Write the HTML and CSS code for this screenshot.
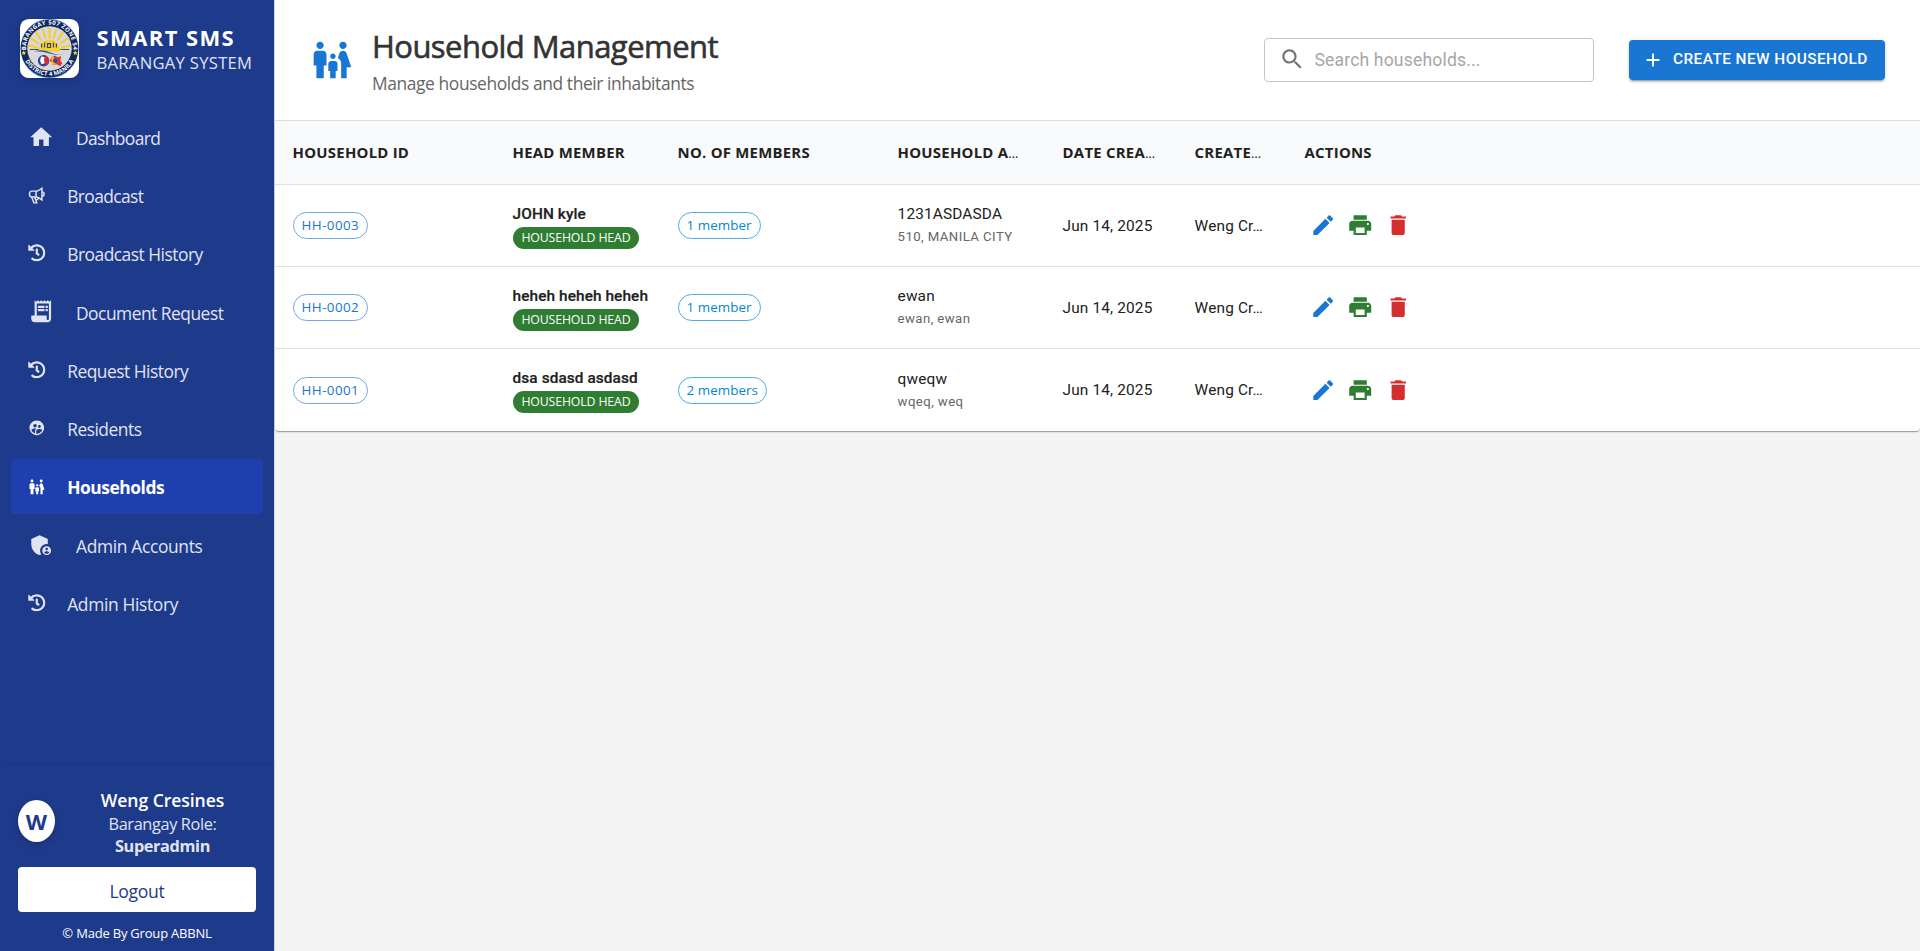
FILE: index.html
```html
<!DOCTYPE html>
<html lang="en">
<head>
<meta charset="utf-8">
<title>Household Management</title>
<link rel="stylesheet" href="styles.css">
</head>
<body>
<svg class="defs" width="0" height="0" aria-hidden="true">
  <symbol id="history" viewBox="0 0 512 512"><path d="M504 255.531c.253 136.64-111.18 248.372-247.82 248.468-59.015.042-113.223-20.53-155.822-54.911-11.077-8.94-11.905-25.541-1.839-35.607l11.267-11.267c8.609-8.609 22.353-9.551 31.891-1.984C173.062 425.135 212.781 440 256 440c101.705 0 184-82.311 184-184 0-101.705-82.311-184-184-184-48.814 0-93.149 18.969-126.068 49.932l50.754 50.754c10.08 10.08 2.941 27.314-11.313 27.314H24c-8.837 0-16-7.163-16-16V38.627c0-14.254 17.234-21.393 27.314-11.314l49.372 49.372C129.209 34.136 189.552 8 256 8c136.81 0 247.747 110.78 248 247.531zm-180.912 78.784l9.823-12.63c8.138-10.463 6.253-25.542-4.21-33.679L288 256.349V152c0-13.255-10.745-24-24-24h-16c-13.255 0-24 10.745-24 24v135.651l65.409 50.874c10.463 8.137 25.541 6.253 33.679-4.21z"/></symbol>
  <symbol id="family" viewBox="0 0 24 24"><path d="M16 4c0-1.11.89-2 2-2s2 .89 2 2-.89 2-2 2-2-.89-2-2zm4 18v-6h2.5l-2.54-7.63C19.68 7.55 18.92 7 18.06 7h-.12c-.86 0-1.63.55-1.9 1.37l-.86 2.58c1.08.6 1.82 1.73 1.82 3.05v8h3zm-7.5-10.5c.83 0 1.5-.67 1.5-1.5s-.67-1.5-1.5-1.5S11 9.17 11 10s.67 1.5 1.5 1.5zM5.5 6c1.11 0 2-.89 2-2s-.89-2-2-2-2 .89-2 2 .89 2 2 2zm2 16v-7H9V9c0-1.1-.9-2-2-2H4c-1.1 0-2 .9-2 2v6h1.5v7h4zm6.5 0v-4h1v-4c0-.82-.68-1.5-1.5-1.5h-2c-.82 0-1.5.68-1.5 1.5v4h1v4h3z"/></symbol>
  <symbol id="edit" viewBox="0 0 24 24"><path d="M3 17.25V21h3.75L17.81 9.94l-3.75-3.75L3 17.25zM20.71 7.04c.39-.39.39-1.02 0-1.41l-2.34-2.34c-.39-.39-1.02-.39-1.41 0l-1.83 1.83 3.75 3.75 1.83-1.83z"/></symbol>
  <symbol id="print" viewBox="0 0 24 24"><path d="M19 8H5c-1.66 0-3 1.34-3 3v6h4v4h12v-4h4v-6c0-1.66-1.34-3-3-3zm-3 11H8v-5h8v5zm3-7c-.55 0-1-.45-1-1s.45-1 1-1 1 .45 1 1-.45 1-1 1zm-1-9H6v4h12V3z"/></symbol>
  <symbol id="trash" viewBox="0 0 24 24"><path d="M6 19c0 1.1.9 2 2 2h8c1.1 0 2-.9 2-2V7H6v12zM19 4h-3.5l-1-1h-5l-1 1H5v2h14V4z"/></symbol>
</svg>
<div class="app">
  <aside class="sidebar">
    <div class="brand">
      <svg class="logo" viewBox="0 0 60 60">
        <defs>
          <path id="arc-top" d="M7.2 37A24 24 0 1 1 52.8 37"/>
          <path id="arc-bottom" d="M4 39.5A27.6 27.6 0 0 0 56 39.5"/>
        </defs>
        <rect width="60" height="60" rx="9" fill="#fff"/>
        <path d="M9 9A30 30 0 0 0 9 51Q17 60 30 60T51 51A30 30 0 0 0 51 9Q43 0 30 0T9 9z" fill="#4f86e0"/>
        <circle cx="30" cy="30" r="29.2" fill="#12295c"/>
        <circle cx="30" cy="30" r="22.6" fill="#d9d9dc"/>
        <g stroke="#f7cb2d" stroke-width="2">
          <path d="M30 20V9M26 20L23 10M34 20l3-10M22 22l-6-9M38 22l6-9M19 25l-9-6M41 25l9-6M18 29l-10-2M42 29l10-2"/>
        </g>
        <path d="M19 33a11 12 0 0 1 22 0z" fill="#f9cf2e"/>
        <path d="M22 25v4M25 24v5M28 25h3v4h-3zM34 24v5M37 25v4" stroke="#33456b" stroke-width="1.2" fill="none"/>
        <path d="M10 31h9M41 31h9" stroke="#4d4a38" stroke-width="1"/>
        <path d="M14 33q8-3 17 1t16 0q-6 4-17 1t-16-2z" fill="#1f5cb0"/>
        <circle cx="24" cy="42.5" r="5.8" fill="#23469b"/>
        <path d="M24 36.7a5.8 5.8 0 0 1 3 10.5q-3-1-2-5t-1-5.5z" fill="#d42c36"/>
        <path d="M22 38q-3 4 0 8l3-1q-1-3 0-6z" fill="#fff"/>
        <path d="M32 39l4-2 2 2 4-1-1 4 2 3-2 3-4-2-3 1-1-3-3-1z" fill="#d9382f"/>
        <path d="M32 38l3 1-2 4 4 3-5 1z" fill="#edb93b"/>
        <path d="M35 40l3 1-1 4-3-1z" fill="#244b9f"/>
        <path d="M3.8 32l.8 1.5 1.6.3-1.2 1.1.3 1.7-1.5-.8-1.5.8.3-1.7-1.2-1.1 1.6-.3zM56.2 32l.8 1.5 1.6.3-1.2 1.1.3 1.7-1.5-.8-1.5.8.3-1.7-1.2-1.1 1.6-.3z" fill="#f9cf2e"/>
        <text class="seal-text seal-top"><textPath href="#arc-top" startOffset="50%" text-anchor="middle">BARANGAY 507 ZONE 54</textPath></text>
        <text class="seal-text"><textPath href="#arc-bottom" startOffset="50%" text-anchor="middle">DISTRICT 4 MANILA</textPath></text>
      </svg>
      <div class="brand-text">
        <div class="brand-name">SMART SMS</div>
        <div class="brand-sub">BARANGAY SYSTEM</div>
      </div>
    </div>
    <nav class="nav">
      <a class="item"><svg class="lg" viewBox="0 0 24 24"><path d="M10 20v-6h4v6h5v-8h3L12 3 2 12h3v8z"/></svg><span class="t-wide">Dashboard</span></a>
      <a class="item"><svg class="sm" viewBox="0 0 24 24"><path fill="none" stroke="currentColor" stroke-width="2" d="M11 15c3 0 8 4 8 4V3s-5 4-8 4v8zM5 15l3 8h4l-3-8M19 14a3 3 0 0 0 0-6M11 19c1 0 3-1 3-3M2 11c0 3 2 4 3 4h6V7H5c-1 0-3 1-3 4z"/></svg><span class="t-wide">Broadcast</span></a>
      <a class="item"><svg class="sm"><use href="#history"/></svg><span>Broadcast History</span></a>
      <a class="item"><svg class="lg" viewBox="0 0 24 24"><path d="M19.5 3.5 18 2l-1.5 1.5L15 2l-1.5 1.5L12 2l-1.5 1.5L9 2 7.5 3.5 6 2v14H3v3c0 1.66 1.34 3 3 3h12c1.66 0 3-1.34 3-3V2l-1.5 1.5zM19 19c0 .55-.45 1-1 1s-1-.45-1-1v-3H8V5h11v14zM9 7h6v2H9zM16 7h2v2h-2zM9 10h6v2H9zM16 10h2v2h-2z"/></svg><span>Document Request</span></a>
      <a class="item"><svg class="sm"><use href="#history"/></svg><span>Request History</span></a>
      <a class="item"><svg class="sm" viewBox="0 0 24 24"><path d="M11.99 2c-5.52 0-10 4.48-10 10s4.48 10 10 10 10-4.48 10-10-4.48-10-10-10zm3.61 6.34c1.07 0 1.93.86 1.93 1.93 0 1.07-.86 1.93-1.93 1.93-1.07 0-1.93-.86-1.93-1.93-.01-1.07.86-1.93 1.93-1.93zm-6-1.58c1.3 0 2.36 1.06 2.36 2.36 0 1.3-1.06 2.36-2.36 2.36s-2.36-1.06-2.36-2.36c0-1.31 1.05-2.36 2.36-2.36zm0 9.13v3.75c-2.4-.75-4.3-2.6-5.14-4.96 1.05-1.12 3.67-1.69 5.14-1.69.53 0 1.2.08 1.9.22-1.64.87-1.9 2.02-1.9 2.68zM11.99 20c-.27 0-.53-.01-.79-.04v-4.07c0-1.42 2.94-2.13 4.4-2.13 1.07 0 2.92.39 3.84 1.15-1.17 2.97-4.06 5.09-7.45 5.09z"/></svg><span>Residents</span></a>
      <a class="item active"><svg class="sm"><use href="#family"/></svg><span>Households</span></a>
      <a class="item"><svg class="lg" viewBox="0 0 24 24"><path d="M17 11c.34 0 .67.04 1 .09V6.27L10.5 3 3 6.27v4.91c0 4.54 3.2 8.79 7.5 9.82.55-.13 1.08-.32 1.6-.55-.69-.98-1.1-2.17-1.1-3.45 0-3.31 2.69-6 6-6z"/><path d="M17 13c-2.21 0-4 1.79-4 4s1.79 4 4 4 4-1.79 4-4-1.79-4-4-4zm0 1.38c.62 0 1.12.51 1.12 1.12s-.51 1.12-1.12 1.12-1.12-.51-1.12-1.12.5-1.12 1.12-1.12zm0 5.37c-.93 0-1.74-.46-2.24-1.17.05-.72 1.51-1.08 2.24-1.08s2.19.36 2.24 1.08c-.5.71-1.31 1.17-2.24 1.17z"/></svg><span class="t-admin">Admin Accounts</span></a>
      <a class="item"><svg class="sm"><use href="#history"/></svg><span class="t-admin">Admin History</span></a>
    </nav>
    <div class="account">
      <div class="profile">
        <div class="avatar">W</div>
        <div class="who">
          <div class="who-name">Weng Cresines</div>
          <div class="who-role">Barangay Role:</div>
          <div class="who-level">Superadmin</div>
        </div>
      </div>
      <button class="logout">Logout</button>
      <div class="credit">© Made By Group ABBNL</div>
    </div>
  </aside>
  <main class="main">
    <header class="head">
      <svg class="head-icon"><use href="#family"/></svg>
      <div class="head-text">
        <h1>Household Management</h1>
        <p>Manage households and their inhabitants</p>
      </div>
      <div class="search">
        <svg viewBox="0 0 24 24"><path d="M15.5 14h-.79l-.28-.27C15.41 12.59 16 11.11 16 9.5 16 5.91 13.09 3 9.5 3S3 5.91 3 9.5 5.91 16 9.5 16c1.61 0 3.09-.59 4.23-1.57l.27.28v.79l5 4.99L20.49 19l-4.99-5zm-6 0C7.01 14 5 11.99 5 9.5S7.01 5 9.5 5 14 7.01 14 9.5 11.99 14 9.5 14z"/></svg>
        <span>Search households...</span>
      </div>
      <button class="create"><svg viewBox="0 0 24 24"><path d="M19 13h-6v6h-2v-6H5v-2h6V5h2v6h6v2z"/></svg><span>CREATE NEW HOUSEHOLD</span></button>
    </header>
    <section class="table">
      <div class="row thead">
        <div>HOUSEHOLD ID</div><div>HEAD MEMBER</div><div>NO. OF MEMBERS</div><div>HOUSEHOLD A<i>…</i></div><div>DATE CREA<i>…</i></div><div>CREATE<i>…</i></div><div>ACTIONS</div>
      </div>
      <div class="row">
        <div><span class="chip">HH-0003</span></div>
        <div class="stack"><b>JOHN kyle</b><span class="badge">HOUSEHOLD HEAD</span></div>
        <div><span class="chip info">1 member</span></div>
        <div class="stack addr"><span>1231ASDASDA</span><small>510, MANILA CITY</small></div>
        <div>Jun 14, 2025</div><div>Weng Cr…</div>
        <div class="actions"><svg class="edit"><use href="#edit"/></svg><svg class="print"><use href="#print"/></svg><svg class="trash"><use href="#trash"/></svg></div>
      </div>
      <div class="row">
        <div><span class="chip">HH-0002</span></div>
        <div class="stack"><b>heheh heheh heheh</b><span class="badge">HOUSEHOLD HEAD</span></div>
        <div><span class="chip info">1 member</span></div>
        <div class="stack addr"><span>ewan</span><small>ewan, ewan</small></div>
        <div>Jun 14, 2025</div><div>Weng Cr…</div>
        <div class="actions"><svg class="edit"><use href="#edit"/></svg><svg class="print"><use href="#print"/></svg><svg class="trash"><use href="#trash"/></svg></div>
      </div>
      <div class="row">
        <div><span class="chip">HH-0001</span></div>
        <div class="stack"><b>dsa sdasd asdasd</b><span class="badge">HOUSEHOLD HEAD</span></div>
        <div><span class="chip info">2 members</span></div>
        <div class="stack addr"><span>qweqw</span><small>wqeq, weq</small></div>
        <div>Jun 14, 2025</div><div>Weng Cr…</div>
        <div class="actions"><svg class="edit"><use href="#edit"/></svg><svg class="print"><use href="#print"/></svg><svg class="trash"><use href="#trash"/></svg></div>
      </div>
    </section>
  </main>
</div>
</body>
</html>
```
FILE: styles.css
```css
* { box-sizing: border-box; }
body { margin: 0; background: #f4f4f4; font-family: "Open Sans", "Noto Sans", sans-serif; }
.defs { display: block; }
svg { fill: currentColor; flex: none; }
button { border: 0; font-family: inherit; }
.app { display: flex; height: 951px; overflow: hidden; }

/* Sidebar */
.sidebar { width: 275px; flex: none; display: flex; flex-direction: column; background: #1e3a8a; border-right: 1px solid #d5d8de; color: #e0e4f2; }
.brand { display: flex; align-items: center; gap: 17.5px; padding: 19px 0 0 20px; }
.logo { width: 59px; height: 59px; overflow: visible; border-radius: 9px; box-shadow: 0 2px 6px rgba(0,0,0,.2); }
.seal-text { font: 700 6px "Open Sans", sans-serif; letter-spacing: .2px; fill: #fff; }
.seal-top { letter-spacing: .4px; }
.brand-text { white-space: nowrap; padding-top: 1px; }
.brand-name { font-size: 22px; font-weight: 700; line-height: 26px; letter-spacing: 1.4px; color: #fff; }
.brand-sub { font-size: 16.6px; line-height: 25px; letter-spacing: .3px; }
.nav { display: flex; flex-direction: column; gap: 3.5px; padding: 31.3px 11px 0; }
.item { display: flex; align-items: center; gap: 21.6px; height: 54.8px; padding-left: 17px; font-size: 17.4px; letter-spacing: -.5px; white-space: nowrap; border-radius: 4px; }
.item span { padding-top: 2px; }
.item .t-wide { letter-spacing: -.6px; }
.item .t-admin { letter-spacing: -.34px; }
.lg { width: 26.4px; height: 26.4px; }
.sm { width: 17.6px; height: 17.6px; }
.active { background: #1e40af; color: #fff; font-weight: 700; }
.active span { letter-spacing: -.46px; }
.account { margin-top: auto; height: 186px; padding: 22px 18px 0; box-shadow: 0 -2px 4px rgba(0,0,0,.06); }
.profile { display: flex; align-items: center; }
.avatar { width: 37px; height: 42px; margin-bottom: 2px; border-radius: 50%; background: #fff; color: #1e3a8a; font-size: 22px; font-weight: 700; line-height: 43px; text-align: center; box-shadow: 0 2px 6px rgba(0,0,0,.2); }
.who { flex: 1; padding-left: 14px; text-align: center; }
.who-name { font-size: 17.6px; font-weight: 600; line-height: 27px; letter-spacing: -.08px; color: #fff; }
.who-role { font-size: 16.3px; line-height: 21px; letter-spacing: -.35px; }
.who-level { font-size: 16.3px; font-weight: 700; line-height: 22px; letter-spacing: -.38px; }
.logout { display: block; width: 238px; height: 45px; margin-top: 10px; padding: 2px 0 0; border-radius: 4px; background: #fff; color: #1e3a8a; font-size: 17.6px; letter-spacing: -.34px; }
.credit { margin-top: 12px; font-size: 13px; line-height: 18px; letter-spacing: -.2px; text-align: center; color: #fff; }

/* Page header */
.main { flex: 1; }
.head { display: flex; align-items: center; height: 121px; padding: 0 35px; background: #fff; border-bottom: 1px solid #e0e0e0; }
.head-icon { width: 44px; height: 44px; color: #1976d2; }
.head-text { flex: 1; padding: 2px 0 0 18px; }
h1 { margin: 0; font-size: 31px; font-weight: 500; line-height: 42px; letter-spacing: -.55px; color: #333; -webkit-text-stroke: .6px #333; }
p { margin: 3px 0 0; font-size: 17.4px; line-height: 27px; letter-spacing: -.4px; color: #666; }
.search { display: flex; align-items: center; width: 330px; height: 44px; padding-left: 14px; gap: 9px; border: 1px solid #c4c4c4; border-radius: 4px; font: 17.6px Roboto, sans-serif; letter-spacing: .15px; color: #a7a7a7; }
.search svg { width: 26.4px; height: 26.4px; color: #757575; margin-bottom: 2px; }
.create { display: flex; align-items: center; width: 256px; height: 40px; margin-left: 35px; padding: 0 0 0 13px; gap: 9px; border-radius: 4px; background: #1976d2; color: #fff; font: 500 15.4px Roboto, sans-serif; letter-spacing: .43px; white-space: nowrap; box-shadow: 0 3px 1px -2px rgba(0,0,0,.2), 0 2px 2px rgba(0,0,0,.14), 0 1px 5px rgba(0,0,0,.12); }
.create svg { width: 22px; height: 22px; }
.create span { padding-bottom: 2px; }

/* Table */
.table { background: #fff; border-radius: 4px; overflow: hidden; box-shadow: 0 2px 1px -1px rgba(0,0,0,.2), 0 1px 1px rgba(0,0,0,.14), 0 1px 3px rgba(0,0,0,.12); }
.row { display: grid; grid-template-columns: 220px 165px 220px 165px 132px 110px 1fr; align-items: center; height: 82px; padding-left: 17.6px; border-bottom: 1px solid #e0e0e0; font: 15.4px Roboto, sans-serif; letter-spacing: .15px; color: #212121; white-space: nowrap; }
.row:last-child { border-bottom: 0; }
.thead { height: 64px; padding-bottom: 2px; background: #f9fafc; font: 700 14.9px "Open Sans", sans-serif; letter-spacing: .25px; }
.thead i { font-style: normal; font-weight: 400; font-size: 13px; letter-spacing: -1px; }
.stack { display: flex; flex-direction: column; align-items: flex-start; }
.stack b { font-weight: 500; line-height: 22px; letter-spacing: .08px; -webkit-text-stroke: .2px; }
.badge { height: 22px; padding: 0 8.8px; border-radius: 11px; background: #2e7d32; color: #fff; font: 12.3px/22px "Open Sans", sans-serif; letter-spacing: -.13px; margin-top: 2px; }
.chip { display: inline-block; height: 27px; padding: 0 8px; border: 1px solid #71a8e2; border-radius: 14px; color: #1976d2; font: 13.4px/25px "Open Sans", sans-serif; letter-spacing: .4px; }
.info { border-color: #4fabdf; color: #0288d1; letter-spacing: .04px; }
.addr span { line-height: 22px; }
.addr small { font-size: 13.2px; line-height: 22px; letter-spacing: .42px; color: #666; margin-top: 1px; }
.actions { display: flex; gap: 11px; padding-left: 5.3px; }
.actions svg { width: 26.4px; height: 26.4px; }
.edit { color: #1976d2; }
.print { color: #2e7d32; }
.trash { color: #d32f2f; }
```
